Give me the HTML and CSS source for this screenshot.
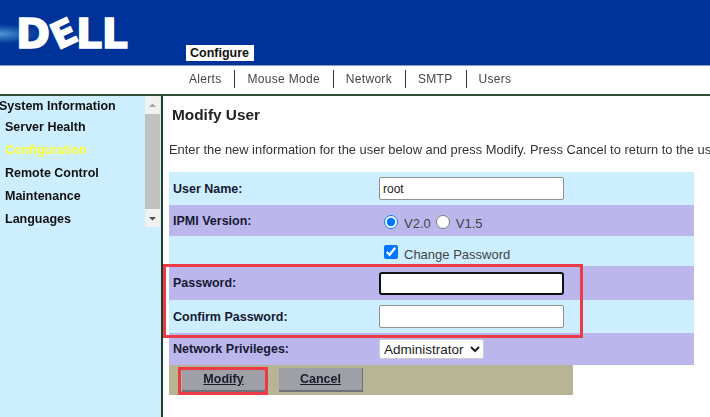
FILE: index.html
```html
<!DOCTYPE html>
<html lang="en">
<head>
  <meta charset="UTF-8">
  <title>Modify User</title>
  <link rel="stylesheet" href="styles.css">
</head>
<body>
  <div class="header">
    <div class="logo">D<span class="logo-e">E</span>LL</div>
    <div class="tab">Configure</div>
  </div>

  <div class="subnav">
    <a>Alerts</a>
    <a>Mouse Mode</a>
    <a>Network</a>
    <a>SMTP</a>
    <a>Users</a>
  </div>

  <div class="main">
    <!-- Left menu -->
    <div class="sidebar">
      <div class="menu">
        <div class="menu-top">System Information</div>
        <div class="menu-item">Server Health</div>
        <div class="menu-item active">Configuration</div>
        <div class="menu-item">Remote Control</div>
        <div class="menu-item">Maintenance</div>
        <div class="menu-item">Languages</div>
      </div>
      <div class="scrollbar">
        <svg class="arrow" width="15" height="18" viewBox="0 0 15 18"><path d="M4 11 L7.5 7.5 L11 11 Z" fill="#a3a3a3"/></svg>
        <div class="thumb"></div>
        <svg class="arrow" width="15" height="18" viewBox="0 0 15 18"><path d="M4 8 L7.5 11.5 L11 8 Z" fill="#505050"/></svg>
      </div>
    </div>

    <!-- User form -->
    <div class="content">
      <h2>Modify User</h2>
      <p class="intro">Enter the new information for the user below and press Modify. Press Cancel to return to the user list.</p>

      <div class="form">
        <div class="row light h33">
          <label>User Name:</label>
          <input class="field" type="text" value="root">
        </div>
        <div class="row purple h31">
          <label>IPMI Version:</label>
          <div class="choices">
            <input type="radio" name="ipmi" checked><span>V2.0</span>
            <input type="radio" name="ipmi"><span>V1.5</span>
          </div>
        </div>
        <div class="row light h30">
          <label></label>
          <div class="choices">
            <input type="checkbox" checked><span>Change Password</span>
          </div>
        </div>
        <div class="row purple h34">
          <label>Password:</label>
          <input class="field focused" type="password">
        </div>
        <div class="row light h33">
          <label>Confirm Password:</label>
          <input class="field" type="password">
        </div>
        <div class="row purple h32">
          <label>Network Privileges:</label>
          <select class="privs">
            <option>Administrator</option>
          </select>
        </div>
        <div class="buttons">
          <button>Modify</button>
          <button>Cancel</button>
        </div>

        <div class="mark mark-fields"></div>
        <div class="mark mark-modify"></div>
      </div>
    </div>
  </div>
</body>
</html>
```

FILE: styles.css
```css
html, body {
  margin: 0;
  padding: 0;
  height: 417px;
  overflow: hidden;
}

body {
  font-family: "Liberation Sans", Arial, sans-serif;
  background-color: white;
  color: #222;
  filter: blur(0.35px);
}

.header {
  height: 65px;
  display: flex;
  align-items: flex-end;
  background: radial-gradient(ellipse 40px 10px at 0 34px, #4f96d2, #1c5cb0 55%, transparent 100%), #003399;
  border-bottom: 1px solid #7f9ccc;
  overflow: hidden;
}

.logo {
  width: 186px;
  height: 65px;
  box-sizing: border-box;
  padding: 9px 0 0 16px;
  font-family: "DejaVu Sans", sans-serif;
  font-size: 41px;
  font-weight: bold;
  letter-spacing: -0.5px;
  line-height: 50px;
  color: white;
  -webkit-text-stroke: 1.5px white;
}

.logo-e {
  display: inline-block;
  transform: rotate(-25deg) scale(0.88);
  margin: 0 -1px 0 0;
}

.tab {
  background-color: white;
  color: #111;
  font-size: 12.5px;
  font-weight: bold;
  line-height: 16px;
  padding: 0 5px 0 4px;
  margin-bottom: 4px;
}

.subnav {
  height: 30px;
  box-sizing: border-box;
  padding: 0 0 2px 189px;
  display: flex;
  align-items: center;
  border-bottom: 2px solid #2f4a35;
  font-size: 12px;
  letter-spacing: 0.3px;
  color: #444;
}

.subnav a {
  padding-right: 13px;
  margin-right: 12px;
  border-right: 1px solid #333;
  line-height: 18px;
}

.subnav a:last-child {
  border-right: none;
}

.main {
  display: flex;
  height: 321px;
}

.sidebar {
  width: 161px;
  display: flex;
  background-color: #cceeff;
  border-right: 2px solid #1f3d28;
}

.menu {
  flex: 1;
  font-size: 12.5px;
  font-weight: bold;
  color: #111;
  line-height: 23px;
}

.menu-top {
  margin-left: -1px;
  line-height: 20px;
}

.menu-item {
  padding-left: 5px;
}

.menu-item.active {
  color: #ffff33;
}

.scrollbar {
  width: 15px;
  height: 131px;
  margin-right: 1px;
  background-color: #f1f1f1;
  display: flex;
  flex-direction: column;
}

.arrow {
  display: block;
}

.thumb {
  flex: 1;
  background-color: #c1c1c1;
}

.content {
  flex: 1;
  min-width: 0;
  padding-left: 6px;
  overflow: hidden;
}

.content h2 {
  margin: 9px 0 0 3px;
  font-size: 15.4px;
  line-height: 20px;
  color: #222;
}

.intro {
  margin: 17px 0 0;
  font-size: 12.9px;
  line-height: 16px;
  white-space: nowrap;
  color: #333;
}

.form {
  position: relative;
  width: 525px;
  margin-top: 14px;
}

.row {
  display: flex;
  align-items: center;
}

.row label {
  width: 206px;
  padding-left: 4px;
  box-sizing: border-box;
  font-size: 12.5px;
  font-weight: bold;
  color: #161a33;
}

.h30 { height: 30px; }
.h31 { height: 31px; }
.h32 { height: 32px; }
.h33 { height: 33px; }
.h34 { height: 34px; }

.light {
  background-color: #cceeff;
}

.purple {
  background-color: #bbb6ec;
}

.field {
  width: 185px;
  height: 23px;
  box-sizing: border-box;
  margin: 0 0 0 4px;
  padding: 0 3px;
  border: 1px solid #8f8f8f;
  border-radius: 2px;
  background-color: white;
  font-family: "Liberation Sans", Arial, sans-serif;
  font-size: 12px;
  color: #222;
}

.field.focused {
  border: 2px solid #111;
  border-radius: 3px;
}

.choices {
  display: flex;
  align-items: center;
  padding: 2px 0 0 4px;
  font-size: 13px;
  color: #444;
}

.choices input {
  margin: 0 6px 0 5px;
  width: 14px;
  height: 14px;
}

.choices span {
  margin-top: 4px;
}

.privs {
  width: 105px;
  height: 20px;
  margin: 0 0 0 4px;
  font-family: "Liberation Sans", Arial, sans-serif;
  font-size: 13.5px;
  color: #222;
  background-color: white;
  border: 1px solid #ccc;
  border-radius: 2px;
}

.buttons {
  width: 404px;
  height: 30px;
  box-sizing: border-box;
  padding: 3px 0 0 13px;
  display: flex;
  gap: 13px;
  background-color: #b8b597;
}

.buttons button {
  width: 84px;
  height: 24px;
  padding: 0;
  border: none;
  border-bottom: 2px solid #707078;
  border-right: 1px solid #707078;
  background-color: #9f9fa8;
  font-family: "Liberation Sans", Arial, sans-serif;
  font-size: 12.5px;
  font-weight: bold;
  text-decoration: underline;
  color: #1a1a2a;
}

/* red annotation boxes over the form */
.mark {
  position: absolute;
  box-sizing: border-box;
  border: 3px solid #ea3b46;
}

.mark-fields {
  left: -6px;
  top: 92px;
  width: 420px;
  height: 74px;
}

.mark-modify {
  left: 9px;
  top: 195px;
  width: 90px;
  height: 28px;
}
```
